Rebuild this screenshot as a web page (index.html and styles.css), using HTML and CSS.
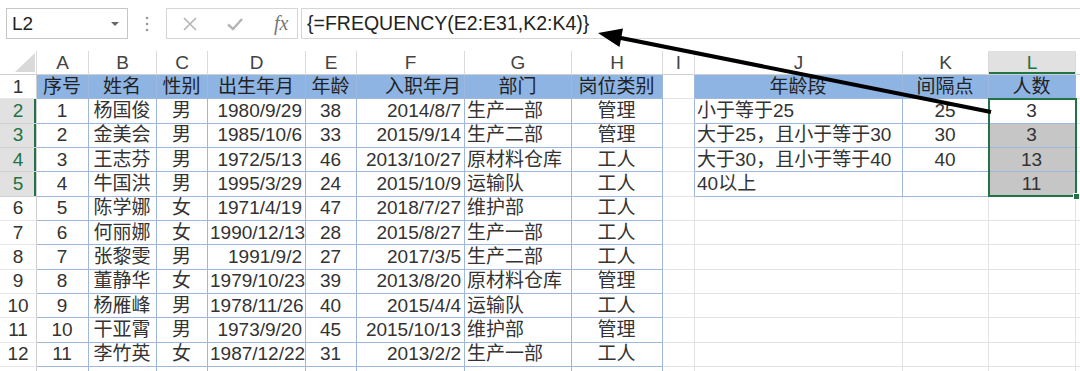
FILE: index.html
```html
<!DOCTYPE html>
<html lang="zh-CN">
<head>
    <meta charset="UTF-8">
    <title>FREQUENCY</title>
    <link rel="stylesheet" href="styles.css">
</head>
<body>

    <div class="toolbar">
        <div class="namebox">
            <span>L2</span>
            <span class="caret"></span>
        </div>
        <div class="dots">
            <svg width="4" height="16" viewBox="0 0 4 16"><circle cx="2" cy="2" r="1.3"/><circle cx="2" cy="8" r="1.3"/><circle cx="2" cy="14" r="1.3"/></svg>
        </div>
        <div class="buttons">
            <svg class="btn" width="16" height="16" viewBox="0 0 16 16"><path d="M2 2 L14 14 M14 2 L2 14"/></svg>
            <svg class="btn" width="18" height="16" viewBox="0 0 18 16"><path d="M2 8.5 L7 13 L16 3"/></svg>
            <span class="fx">fx</span>
        </div>
        <div class="formula">{=FREQUENCY(E2:E31,K2:K4)}</div>
    </div>

    <div class="sheet">
        <table class="grid">
            <colgroup>
                <col class="w-rh"><col class="w-a"><col class="w-b"><col class="w-c"><col class="w-d"><col class="w-e"><col class="w-f"><col class="w-g"><col class="w-h"><col class="w-i"><col class="w-j"><col class="w-k"><col class="w-l"><col class="w-m">
            </colgroup>
            <thead>
                <tr class="colhead">
                    <th class="corner"><svg width="20" height="19" viewBox="0 0 20 19"><polygon points="0,19 20,19 20,0"/></svg></th>
                    <th>A</th><th>B</th><th>C</th><th>D</th><th>E</th><th>F</th><th>G</th><th>H</th><th>I</th><th>J</th><th>K</th><th class="on">L</th><th></th>
                </tr>
            </thead>
            <tbody>
                <tr>
                    <th class="rh">1</th>
                    <td class="b hd c">序号</td><td class="b hd c">姓名</td><td class="b hd c">性别</td><td class="b hd c">出生年月</td><td class="b hd c">年龄</td><td class="b hd r">入职年月</td><td class="b hd c">部门</td><td class="b hd c">岗位类别</td>
                    <td class="bl"></td>
                    <td class="b hd c">年龄段</td><td class="b hd c">间隔点</td><td class="b hd c">人数</td><td></td>
                </tr>
                <tr>
                    <th class="rh on">2</th>
                    <td class="b c">1</td><td class="b c">杨国俊</td><td class="b c">男</td><td class="b r">1980/9/29</td><td class="b c">38</td><td class="b r">2014/8/7</td><td class="b">生产一部</td><td class="b c">管理</td>
                    <td class="bl"></td>
                    <td class="b">小于等于25</td><td class="b c">25</td><td class="b c">3</td><td></td>
                </tr>
                <tr>
                    <th class="rh on">3</th>
                    <td class="b c">2</td><td class="b c">金美会</td><td class="b c">男</td><td class="b r">1985/10/6</td><td class="b c">33</td><td class="b r">2015/9/14</td><td class="b">生产二部</td><td class="b c">管理</td>
                    <td class="bl"></td>
                    <td class="b">大于25，且小于等于30</td><td class="b c">30</td><td class="b c g">3</td><td></td>
                </tr>
                <tr>
                    <th class="rh on">4</th>
                    <td class="b c">3</td><td class="b c">王志芬</td><td class="b c">男</td><td class="b r">1972/5/13</td><td class="b c">46</td><td class="b r">2013/10/27</td><td class="b">原材料仓库</td><td class="b c">工人</td>
                    <td class="bl"></td>
                    <td class="b">大于30，且小于等于40</td><td class="b c">40</td><td class="b c g">13</td><td></td>
                </tr>
                <tr>
                    <th class="rh on">5</th>
                    <td class="b c">4</td><td class="b c">牛国洪</td><td class="b c">男</td><td class="b r">1995/3/29</td><td class="b c">24</td><td class="b r">2015/10/9</td><td class="b">运输队</td><td class="b c">工人</td>
                    <td class="bl"></td>
                    <td class="b">40以上</td><td class="b c"></td><td class="b c g">11</td><td></td>
                </tr>
                <tr>
                    <th class="rh">6</th>
                    <td class="b c">5</td><td class="b c">陈学娜</td><td class="b c">女</td><td class="b r">1971/4/19</td><td class="b c">47</td><td class="b r">2018/7/27</td><td class="b">维护部</td><td class="b c">工人</td>
                    <td></td><td></td><td></td><td></td><td></td>
                </tr>
                <tr>
                    <th class="rh">7</th>
                    <td class="b c">6</td><td class="b c">何丽娜</td><td class="b c">女</td><td class="b r">1990/12/13</td><td class="b c">28</td><td class="b r">2015/8/27</td><td class="b">生产一部</td><td class="b c">工人</td>
                    <td></td><td></td><td></td><td></td><td></td>
                </tr>
                <tr>
                    <th class="rh">8</th>
                    <td class="b c">7</td><td class="b c">张黎雯</td><td class="b c">男</td><td class="b r">1991/9/2</td><td class="b c">27</td><td class="b r">2017/3/5</td><td class="b">生产二部</td><td class="b c">工人</td>
                    <td></td><td></td><td></td><td></td><td></td>
                </tr>
                <tr>
                    <th class="rh">9</th>
                    <td class="b c">8</td><td class="b c">董静华</td><td class="b c">女</td><td class="b r">1979/10/23</td><td class="b c">39</td><td class="b r">2013/8/20</td><td class="b">原材料仓库</td><td class="b c">管理</td>
                    <td></td><td></td><td></td><td></td><td></td>
                </tr>
                <tr>
                    <th class="rh">10</th>
                    <td class="b c">9</td><td class="b c">杨雁峰</td><td class="b c">男</td><td class="b r">1978/11/26</td><td class="b c">40</td><td class="b r">2015/4/4</td><td class="b">运输队</td><td class="b c">工人</td>
                    <td></td><td></td><td></td><td></td><td></td>
                </tr>
                <tr>
                    <th class="rh">11</th>
                    <td class="b c">10</td><td class="b c">干亚霄</td><td class="b c">男</td><td class="b r">1973/9/20</td><td class="b c">45</td><td class="b r">2015/10/13</td><td class="b">维护部</td><td class="b c">管理</td>
                    <td></td><td></td><td></td><td></td><td></td>
                </tr>
                <tr>
                    <th class="rh">12</th>
                    <td class="b c">11</td><td class="b c">李竹英</td><td class="b c">女</td><td class="b r">1987/12/22</td><td class="b c">31</td><td class="b r">2013/2/2</td><td class="b">生产一部</td><td class="b c">工人</td>
                    <td></td><td></td><td></td><td></td><td></td>
                </tr>
                <tr>
                    <th class="rh"></th>
                    <td class="b"></td><td class="b"></td><td class="b"></td><td class="b"></td><td class="b"></td><td class="b"></td><td class="b"></td><td class="b"></td>
                    <td></td><td></td><td></td><td></td><td></td>
                </tr>
            </tbody>
        </table>

        <div class="selection"></div>
        <div class="fill-handle"></div>
    </div>

    <svg class="arrow" width="1080" height="371" viewBox="0 0 1080 371">
        <line x1="991" y1="112" x2="616" y2="37"/>
        <polygon points="598,33 623,28.5 619.5,47"/>
    </svg>

</body>
</html>
```

FILE: styles.css
```css
* {
    box-sizing: border-box;
}

body {
    margin: 0;
    width: 1080px;
    height: 371px;
    overflow: hidden;
    position: relative;
    background-color: #fff;
    font-family: "Liberation Sans", "Noto Sans CJK SC", sans-serif;
    color: #333;
}

/* formula bar */
.toolbar {
    display: flex;
    align-items: center;
    height: 51px;
    padding: 8px 0 12px 6px;
}

.namebox {
    width: 122px;
    height: 31px;
    border: 1px solid #c6c6c6;
    display: flex;
    align-items: center;
    justify-content: space-between;
    padding: 0 8px 0 5px;
    font-size: 19px;
    color: #222;
}

.caret {
    width: 0;
    height: 0;
    border-left: 4px solid transparent;
    border-right: 4px solid transparent;
    border-top: 4px solid #666;
}

.dots {
    width: 38px;
    display: flex;
    justify-content: center;
    fill: #9a9a9a;
}

.buttons {
    width: 132px;
    height: 31px;
    border: 1px solid #d6d6d6;
    display: flex;
    align-items: center;
    padding-left: 15px;
    gap: 28px;
}

.btn {
    fill: none;
    stroke: #b4b4b4;
    stroke-width: 1.6;
}

.btn + .btn {
    stroke-width: 2.4;
}

.fx {
    font-family: "Liberation Serif", serif;
    font-style: italic;
    font-size: 20px;
    color: #777;
    margin-left: 2px;
}

.formula {
    flex: 1;
    height: 31px;
    margin-left: 3px;
    border: 1px solid #d6d6d6;
    border-right: none;
    padding-left: 5px;
    display: flex;
    align-items: center;
    font-size: 19.5px;
    color: #222;
    white-space: nowrap;
}

/* sheet grid */
.sheet {
    position: relative;
}

.grid {
    border-collapse: separate;
    border-spacing: 0;
    table-layout: fixed;
    width: 1096px;
    font-size: 19px;
}

.w-rh { width: 37px; }
.w-a { width: 52px; }
.w-b { width: 68px; }
.w-c { width: 51px; }
.w-d { width: 98px; }
.w-e { width: 51px; }
.w-f { width: 108px; }
.w-g { width: 107px; }
.w-h { width: 91px; }
.w-i { width: 32px; }
.w-j { width: 208px; }
.w-k { width: 86px; }
.w-l { width: 87px; }
.w-m { width: 20px; }

.colhead th {
    height: 24px;
    padding: 0;
    font-weight: normal;
    font-size: 19px;
    color: #444;
    background-color: #fff;
    border-right: 1px solid #dadada;
    border-bottom: 1px solid #cfcfcf;
}

.colhead th.on {
    background-color: #e1e1e1;
    color: #217346;
    box-shadow: inset 0 -2px #217346;
}

.corner {
    text-align: right;
    vertical-align: bottom;
}

.corner svg {
    display: block;
    margin: 0 1px 2px auto;
    fill: #d9d9d9;
}

td, .rh {
    height: 24.33px;
    padding: 0 3px 0 2px;
    white-space: nowrap;
    overflow: hidden;
    border-right: 1px solid #e3e3e3;
    border-bottom: 1px solid #e3e3e3;
    line-height: 22px;
}

.rh {
    font-weight: normal;
    text-align: center;
    padding: 0;
    color: #333;
    background-color: #fff;
    border-right-color: #cfcfcf;
    border-bottom-color: #e6e6e6;
}

.rh.on {
    background-color: #e1e1e1;
    color: #217346;
    border-bottom-color: #d0d0d0;
    box-shadow: inset -2px 0 #217346;
}

td.b {
    border-right-color: #9db8dc;
    border-bottom-color: #9db8dc;
}

td.bl {
    border-right-color: #9db8dc;
}

td.hd {
    background-color: #8db4e2;
    color: #222;
}

td.g {
    background-color: #c6c6c6;
}

.c { text-align: center; }
.r { text-align: right; }

/* selected range L2:L5 */
.selection {
    position: absolute;
    left: 988px;
    top: 47px;
    width: 89px;
    height: 99px;
    border: 2px solid #217346;
}

.fill-handle {
    position: absolute;
    left: 1073px;
    top: 142px;
    width: 7px;
    height: 7px;
    background-color: #217346;
    border: 1px solid #fff;
}

.arrow {
    position: absolute;
    left: 0;
    top: 0;
    pointer-events: none;
}

.arrow line {
    stroke: #000;
    stroke-width: 4;
}

.arrow polygon {
    fill: #000;
}
```
